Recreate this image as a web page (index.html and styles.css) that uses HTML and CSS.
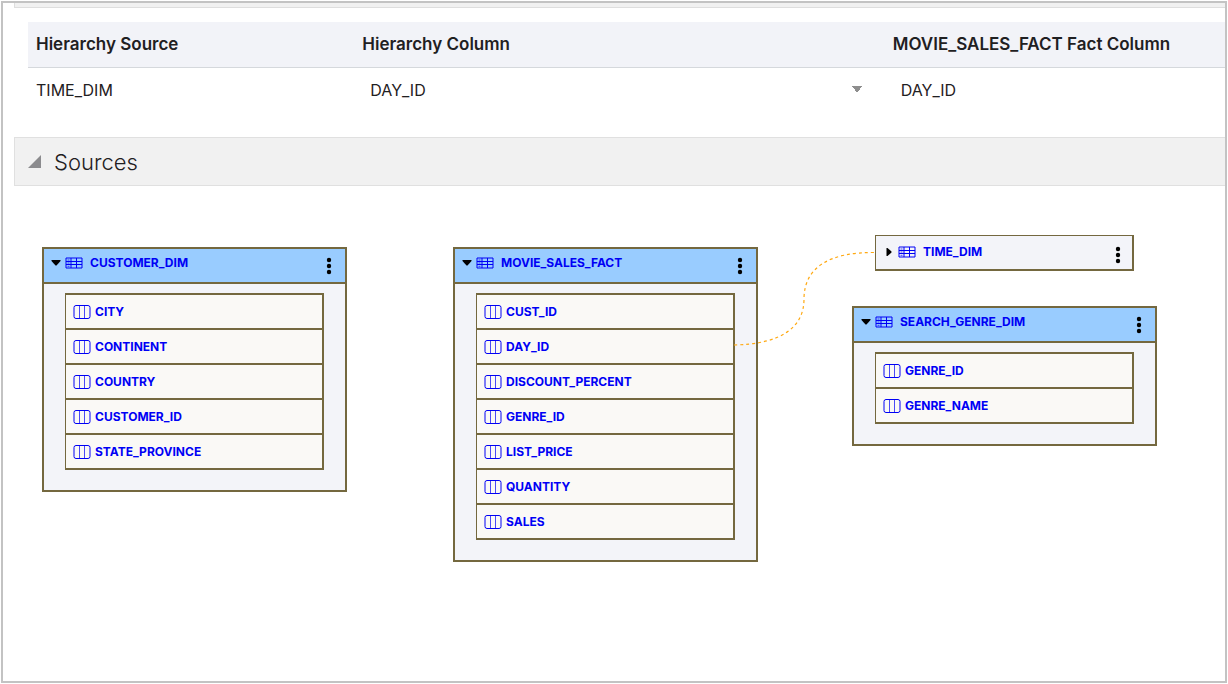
FILE: index.html
```html
<!DOCTYPE html>
<html lang="en">
<head>
<meta charset="utf-8">
<title>Sources</title>
<link rel="stylesheet" href="styles.css">
</head>
<body>
<svg class="defs" aria-hidden="true">
  <symbol id="table" viewBox="0 0 18 12">
    <path d="M1 1H17V11H1ZM1 4.500H17M1 7.500H17M6 1V11M11.500 1V11" fill="none" stroke="currentColor" stroke-width="1"/>
    <path d="M2.500 3H4.500M2.500 6H4.500M2.500 9.300H4.500" stroke="currentColor" stroke-width="0.7"/>
  </symbol>
  <symbol id="column" viewBox="0 0 18 14">
    <rect x="1" y="0.500" width="16" height="13" rx="2" fill="none" stroke="currentColor" stroke-width="1"/>
    <path d="M6.500 1V13M11.500 1V13" stroke="currentColor" stroke-width="1" stroke-opacity="0.7"/>
  </symbol>
  <symbol id="down" viewBox="0 0 10 6"><path d="M0.500 0H9.500V1L5.500 5.500H4.500L0.500 1Z" fill="currentColor"/></symbol>
  <symbol id="right" viewBox="0 0 6 10"><path d="M0.500 1H1.500L5.500 4.500V5.500L1.500 9H0.500Z" fill="currentColor"/></symbol>
  <symbol id="dots" viewBox="0 0 6 18">
    <g fill="currentColor"><circle cx="3" cy="3" r="2.200"/><circle cx="3" cy="9" r="2.200"/><circle cx="3" cy="15" r="2.200"/></g>
  </symbol>
</svg>
<main class="frame">
  <div class="section-edge"></div>
  <div class="table-wrap">
    <table class="joins">
      <thead>
        <tr><th class="col-source">Hierarchy Source</th><th class="col-key">Hierarchy Column</th><th>MOVIE_SALES_FACT Fact Column</th></tr>
      </thead>
      <tbody>
        <tr>
          <td>TIME_DIM</td>
          <td><select class="picker" aria-label="Hierarchy Column"><option>DAY_ID</option></select></td>
          <td><select class="picker" aria-label="MOVIE_SALES_FACT Fact Column"><option>DAY_ID</option></select></td>
        </tr>
      </tbody>
    </table>
  </div>
  <button class="section" type="button" aria-expanded="true">
    <svg class="section-mark" viewBox="0 0 13 13" aria-hidden="true"><path d="M0 13L13 0V13Z" fill="#8b8b8e"/></svg>
    <span>Sources</span>
  </button>
  <div class="canvas">
    <section class="node node-customer">
      <header class="node-head">
        <button class="toggle" type="button" aria-label="Collapse CUSTOMER_DIM"><svg class="i-down"><use href="#down"/></svg></button>
        <svg class="i-table"><use href="#table"/></svg><span class="name">CUSTOMER_DIM</span>
        <button class="menu" type="button" aria-label="CUSTOMER_DIM actions"><svg class="i-dots"><use href="#dots"/></svg></button>
      </header>
      <ul class="columns">
        <li><svg class="i-column"><use href="#column"/></svg><span>CITY</span></li>
        <li><svg class="i-column"><use href="#column"/></svg><span>CONTINENT</span></li>
        <li><svg class="i-column"><use href="#column"/></svg><span>COUNTRY</span></li>
        <li><svg class="i-column"><use href="#column"/></svg><span>CUSTOMER_ID</span></li>
        <li><svg class="i-column"><use href="#column"/></svg><span>STATE_PROVINCE</span></li>
      </ul>
    </section>
    <section class="node node-sales">
      <header class="node-head">
        <button class="toggle" type="button" aria-label="Collapse MOVIE_SALES_FACT"><svg class="i-down"><use href="#down"/></svg></button>
        <svg class="i-table"><use href="#table"/></svg><span class="name">MOVIE_SALES_FACT</span>
        <button class="menu" type="button" aria-label="MOVIE_SALES_FACT actions"><svg class="i-dots"><use href="#dots"/></svg></button>
      </header>
      <ul class="columns">
        <li><svg class="i-column"><use href="#column"/></svg><span>CUST_ID</span></li>
        <li><svg class="i-column"><use href="#column"/></svg><span>DAY_ID</span></li>
        <li><svg class="i-column"><use href="#column"/></svg><span>DISCOUNT_PERCENT</span></li>
        <li><svg class="i-column"><use href="#column"/></svg><span>GENRE_ID</span></li>
        <li><svg class="i-column"><use href="#column"/></svg><span>LIST_PRICE</span></li>
        <li><svg class="i-column"><use href="#column"/></svg><span>QUANTITY</span></li>
        <li><svg class="i-column"><use href="#column"/></svg><span>SALES</span></li>
      </ul>
    </section>
    <section class="node node-time">
      <header class="node-head">
        <button class="toggle" type="button" aria-label="Expand TIME_DIM"><svg class="i-right"><use href="#right"/></svg></button>
        <svg class="i-table"><use href="#table"/></svg><span class="name">TIME_DIM</span>
        <button class="menu" type="button" aria-label="TIME_DIM actions"><svg class="i-dots"><use href="#dots"/></svg></button>
      </header>
    </section>
    <section class="node node-genre">
      <header class="node-head">
        <button class="toggle" type="button" aria-label="Collapse SEARCH_GENRE_DIM"><svg class="i-down"><use href="#down"/></svg></button>
        <svg class="i-table"><use href="#table"/></svg><span class="name">SEARCH_GENRE_DIM</span>
        <button class="menu" type="button" aria-label="SEARCH_GENRE_DIM actions"><svg class="i-dots"><use href="#dots"/></svg></button>
      </header>
      <ul class="columns">
        <li><svg class="i-column"><use href="#column"/></svg><span>GENRE_ID</span></li>
        <li><svg class="i-column"><use href="#column"/></svg><span>GENRE_NAME</span></li>
      </ul>
    </section>
    <svg class="link" viewBox="0 0 142 96" aria-hidden="true"><path d="M0 94C48 93 70 76 70 48C70 16 96 1 141 1.500" fill="none" stroke="#ffa912" stroke-width="1.200" stroke-dasharray="3 3"/></svg>
  </div>
</main>
</body>
</html>
```

FILE: styles.css
```css
* { box-sizing: border-box; }
body {
  margin: 0;
  padding: 1px;
  background: #fff;
  color: #1f2022;
  font-family: Inter, "Liberation Sans", sans-serif;
}
button, select { font: inherit; color: inherit; border: 0; padding: 0; background: none; }
.defs { position: absolute; width: 0; height: 0; }
.frame {
  display: flex;
  flex-direction: column;
  min-height: calc(100vh - 2px);
  border: 2px solid #c3c3c3;
  overflow: hidden;
}
.section-edge {
  height: 5px;
  margin-left: 11px;
  background: #f1f1f1;
  border-bottom: 1px solid #dedede;
  border-left: 1px solid #dedede;
}
.table-wrap { margin: 14px 0 25px 25px; overflow: hidden; }
.joins { width: 116%; border-collapse: collapse; table-layout: fixed; font-size: 16px; line-height: 24px; }
.joins th {
  height: 45px;
  padding: 0 8px;
  background: #f2f3f8;
  border-bottom: 1px solid #d5d8dc;
  font-size: 17px;
  font-weight: 600;
  text-align: left;
}
.joins td { height: 45px; padding: 0 8px; }
.col-source { width: 23.5%; }
.col-key { width: 38.2%; }
.picker {
  display: block;
  width: 100%;
  padding: 0 32px 0 8px;
  appearance: none;
  background:
    linear-gradient(to bottom right, #8e8e8e 50%, transparent 50%) right 15px center / 5px 7px no-repeat,
    linear-gradient(to bottom left, #8e8e8e 50%, transparent 50%) right 20px center / 5px 7px no-repeat;
}
.section {
  display: flex;
  align-items: center;
  gap: 13px;
  height: 49px;
  margin-left: 11px;
  padding-left: 13px;
  background: #f1f1f1;
  border: 1px solid #e0e0e0;
  border-right: 0;
  font-size: 22px;
  font-weight: 300;
}
.section-mark { width: 13px; height: 13px; }
.canvas { position: relative; flex: 1; min-height: 400px; }
.node {
  position: absolute;
  width: 305px;
  background: #f3f4f9;
  border: 2px solid #74683f;
  color: #0000f5;
  font-size: 12px;
  font-weight: 700;
  line-height: 16px;
}
.node-customer { left: 39px; top: 61px; }
.node-sales { left: 450px; top: 61px; }
.node-genre { left: 849px; top: 120px; }
.node-time { left: 872px; top: 49px; width: 259px; border-width: 1px 2px 2px 1px; }
.node-head {
  display: flex;
  align-items: flex-start;
  height: 35px;
  padding: 6px 13px 0 7px;
  background: #99ccff;
  border-bottom: 2px solid #74683f;
}
.node-time .node-head { height: 33px; padding: 8px 11px 0 8px; background: none; border: 0; }
.toggle, .menu { display: flex; align-items: center; justify-content: center; color: #000; }
.toggle { width: 10px; height: 16px; margin-right: 4px; }
.menu { height: 22px; margin-left: auto; }
.name { margin-left: 7px; }
.i-down { width: 10px; height: 6px; }
.i-right { width: 6px; height: 10px; }
.i-table { width: 18px; height: 12px; margin-top: 2px; }
.i-dots { width: 6px; height: 18px; }
.i-column { width: 18px; height: 14px; }
.columns {
  margin: 9px 21px 20px;
  padding: 0;
  list-style: none;
  background: #faf9f6;
  border: 2px solid #74683f;
  border-width: 2px 2px 0 1px;
}
.columns li {
  display: flex;
  align-items: center;
  gap: 4px;
  height: 35px;
  padding-left: 7px;
  border-bottom: 2px solid #74683f;
}
.link { position: absolute; left: 731px; top: 65px; width: 142px; height: 96px; }
```
